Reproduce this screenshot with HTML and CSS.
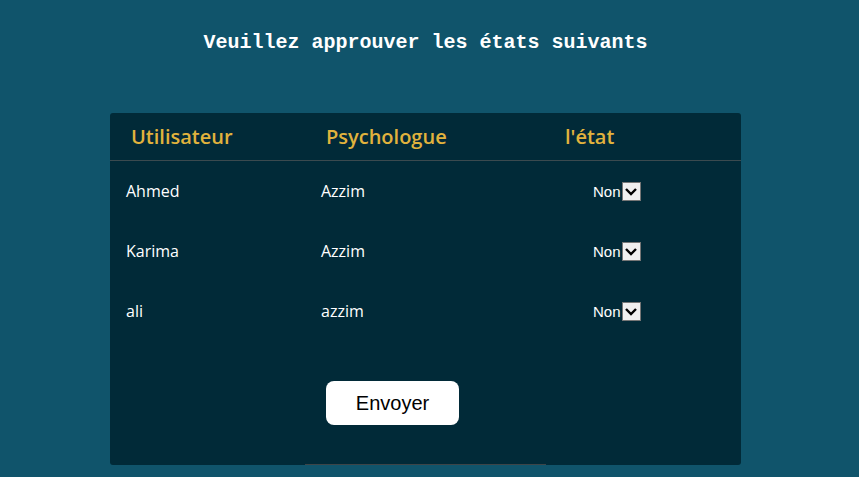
FILE: index.html
```html
<!DOCTYPE html>
<html lang="fr">
<head>
<meta charset="utf-8">
<title>États</title>
<link rel="stylesheet" href="styles.css">
</head>
<body>
<main class="page">
  <h1 class="title">Veuillez approuver les états suivants</h1>
  <section class="card">
    <div class="row head">
      <div class="cell">Utilisateur</div>
      <div class="cell">Psychologue</div>
      <div class="cell">l'état</div>
    </div>
    <div class="row">
      <div class="cell">Ahmed</div>
      <div class="cell">Azzim</div>
      <div class="cell state"><span class="sel">Non<span class="arrow"><svg width="14" height="10" viewBox="0 0 14 10"><path d="M2 2 L7 7 L12 2" fill="none" stroke="#000" stroke-width="2.4"/></svg></span></span></div>
    </div>
    <div class="row">
      <div class="cell">Karima</div>
      <div class="cell">Azzim</div>
      <div class="cell state"><span class="sel">Non<span class="arrow"><svg width="14" height="10" viewBox="0 0 14 10"><path d="M2 2 L7 7 L12 2" fill="none" stroke="#000" stroke-width="2.4"/></svg></span></span></div>
    </div>
    <div class="row">
      <div class="cell">ali</div>
      <div class="cell">azzim</div>
      <div class="cell state"><span class="sel">Non<span class="arrow"><svg width="14" height="10" viewBox="0 0 14 10"><path d="M2 2 L7 7 L12 2" fill="none" stroke="#000" stroke-width="2.4"/></svg></span></span></div>
    </div>
    <div class="actions">
      <button class="send" type="button">Envoyer</button>
    </div>
    <div class="foot-line"></div>
  </section>
</main>
</body>
</html>
```

FILE: styles.css
```css
html, body {
  margin: 0;
  padding: 0;
}
body {
  background: #10546b;
  height: 477px;
  overflow: hidden;
}
.page {
  width: 631px;
  margin-left: 110px;
  padding-top: 31px;
}
.title {
  margin: 0;
  text-align: center;
  font-family: "Liberation Mono", "Courier New", monospace;
  font-weight: bold;
  font-size: 20px;
  line-height: 24px;
  color: #ffffff;
}
.card {
  margin-top: 58px;
  background: #012a38;
  border-radius: 3px;
  font-family: "Open Sans", sans-serif;
  color: #ffffff;
}
.row {
  display: grid;
  grid-template-columns: 195px 239px 1fr;
  height: 60px;
  align-items: center;
  font-size: 16px;
}
.row .cell {
  padding-left: 16px;
}
.row.head {
  height: 48px;
  border-bottom: 1px solid #3b4a4f;
  box-sizing: border-box;
  color: #e1b33d;
  font-size: 20px;
  font-weight: 600;
}
.row.head .cell {
  padding-left: 21px;
}
.row .state {
  padding-left: 49px;
}
.sel {
  display: inline-flex;
  align-items: center;
  font-family: "Liberation Sans", Arial, sans-serif;
  font-size: 15px;
  color: #ffffff;
}
.arrow {
  display: inline-flex;
  align-items: center;
  justify-content: center;
  width: 17px;
  height: 17px;
  margin-left: 1px;
  background: #efefef;
  border: 1px solid #767676;
}
.actions {
  display: flex;
  padding: 40px 0 39px 216px;
}
.send {
  width: 133px;
  height: 44px;
  border: none;
  border-radius: 8px;
  background: #ffffff;
  color: #000000;
  font-family: "Liberation Sans", Arial, sans-serif;
  font-size: 20px;
  padding: 0;
}
.foot-line {
  margin-left: 195px;
  width: 241px;
  height: 1px;
  background: #3d4548;
}
```
